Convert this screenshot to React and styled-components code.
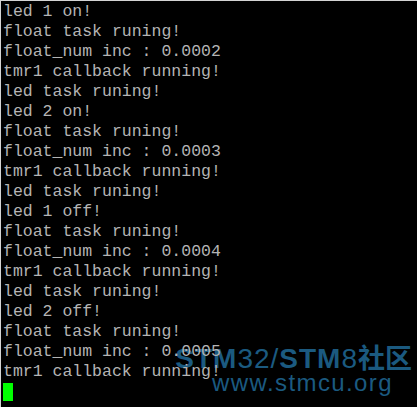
import React from "react";
import styled, { createGlobalStyle } from "styled-components";

const GlobalStyle = createGlobalStyle`
  html, body {
    margin: 0;
    padding: 0;
    background: #000;
  }
`;

const Console = styled.div`
  position: relative;
  width: 417px;
  height: 407px;
  overflow: hidden;
  background: #000;
  border-top: 1px solid #d4d4d4;
  border-left: 1px solid #d4d4d4;
  padding: 1px 0 0 2px;
  box-sizing: border-box;
`;

const Line = styled.div`
  position: relative;
  z-index: 1;
  height: 20px;
  line-height: 20px;
  font-family: "Liberation Mono", "DejaVu Sans Mono", monospace;
  font-size: 16.5px;
  color: #b4b4b4;
  white-space: pre;
`;

const Cursor = styled.div`
  width: 10px;
  height: 18px;
  margin-top: 1px;
  background: #00ff00;
`;

const Watermark = styled.div`
  position: absolute;
  z-index: 0;
  right: 5px;
  bottom: 13px;
  display: flex;
  flex-direction: column;
  align-items: flex-end;
  color: #1b5a80;
  font-family: "Liberation Sans", Arial, "Noto Sans CJK SC", sans-serif;
  pointer-events: none;
`;

const Brand = styled.div`
  font-size: 28px;
  line-height: 26px;
  letter-spacing: 1px;
  white-space: nowrap;
  b {
    font-weight: 700;
  }
  span {
    font-weight: 400;
  }
  em {
    font-style: normal;
    font-weight: 700;
    font-family: "Noto Sans CJK SC", sans-serif;
    font-size: 27px;
    letter-spacing: 0;
  }
`;

const Site = styled.div`
  font-size: 24px;
  line-height: 22px;
  letter-spacing: 1.4px;
  margin-right: 19px;
  white-space: nowrap;
`;

const lines = [
  "led 1 on!",
  "float task runing!",
  "float_num inc : 0.0002",
  "tmr1 callback running!",
  "led task runing!",
  "led 2 on!",
  "float task runing!",
  "float_num inc : 0.0003",
  "tmr1 callback running!",
  "led task runing!",
  "led 1 off!",
  "float task runing!",
  "float_num inc : 0.0004",
  "tmr1 callback running!",
  "led task runing!",
  "led 2 off!",
  "float task runing!",
  "float_num inc : 0.0005",
  "tmr1 callback running!",
];

export default function App() {
  return (
    <>
      <GlobalStyle />
      <Console>
        {lines.map((text, i) => (
          <Line key={i}>{text}</Line>
        ))}
        <Cursor />
        <Watermark>
          <Brand>
            <b>STM</b>
            <span>32/</span>
            <b>STM</b>
            <span>8</span>
            <em>社区</em>
          </Brand>
          <Site>www.stmcu.org</Site>
        </Watermark>
      </Console>
    </>
  );
}
